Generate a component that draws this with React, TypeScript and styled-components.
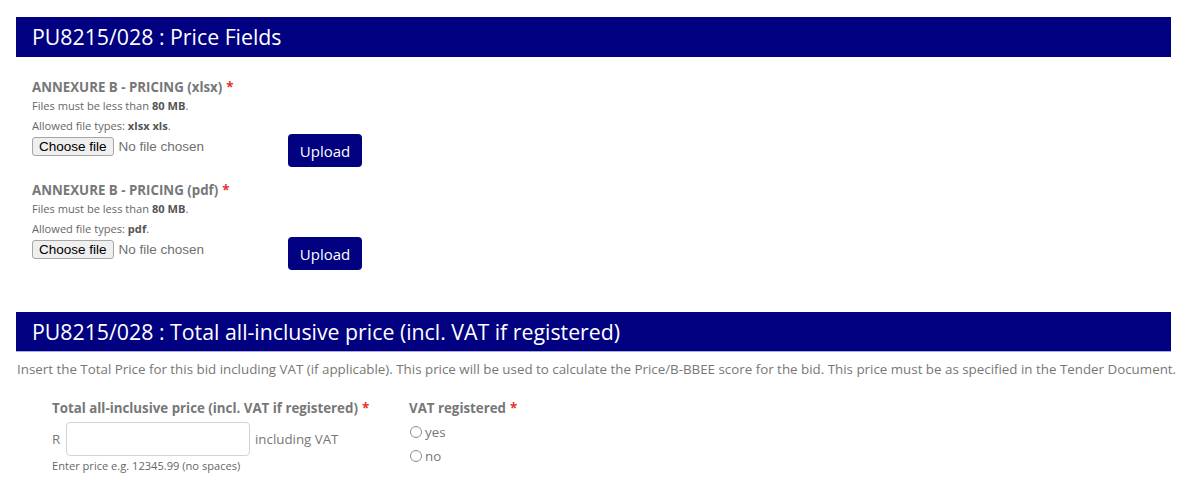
import React, { FC } from 'react';
import styled, { createGlobalStyle } from 'styled-components';

const GlobalStyle = createGlobalStyle`
    body {
        margin: 0;
        background: #fff;
        font-family: 'Open Sans', 'Noto Sans', sans-serif;
        color: #666;
    }
`;

const Page = styled.div`
    padding: 17px 29px 0 16px;
`;

const SectionHeader = styled.h2<{ $underline?: boolean }>`
    margin: 0;
    height: ${({ $underline }) => ($underline ? '39px' : '40px')};
    padding: 0 16px;
    background: #000080;
    color: #fff;
    font-size: 21.3px;
    font-weight: 400;
    line-height: ${({ $underline }) => ($underline ? '39px' : '40px')};
    border-bottom: ${({ $underline }) => ($underline ? '1px solid #a9a9e0' : 'none')};
`;

const UploadList = styled.div`
    padding: 22px 0 0 16px;
    display: flex;
    flex-direction: column;
    gap: 15px;
`;

const Field = styled.div`
    display: flex;
    flex-direction: column;
`;

const Label = styled.label`
    font-size: 13.3px;
    font-weight: 700;
    line-height: 17px;
    color: #777;
`;

const Required = styled.span`
    color: #e8302a;
    margin-left: 4px;
`;

const Hint = styled.div`
    font-size: 11.1px;
    line-height: 20px;
    color: #666;

    strong {
        color: #555;
        font-weight: 700;
    }
`;

const FileRow = styled.div`
    display: flex;
    align-items: flex-start;
    gap: 16px;
    margin-top: -2px;
`;

const FilePicker = styled.div`
    width: 240px;
    margin-top: 3px;
    display: flex;
    align-items: center;
    font-family: 'Liberation Sans', Arial, sans-serif;
    font-size: 13.5px;
`;

const ChooseButton = styled.span`
    display: inline-block;
    height: 17px;
    padding: 0 6px;
    line-height: 17px;
    border: 1px solid #a6a6a6;
    border-radius: 3px;
    background: #efefef;
    color: #000;
`;

const NoFile = styled.span`
    margin-left: 5px;
    color: #707070;
`;

const UploadButton = styled.button`
    height: 33px;
    width: 74px;
    padding: 0;
    border: none;
    border-radius: 4px;
    background: #000080;
    color: #fff;
    font-family: 'Open Sans', sans-serif;
    font-size: 15px;
`;

const TotalSection = styled.div`
    margin-top: 42px;
`;

const Intro = styled.p`
    margin: 7px 0 0 1px;
    font-size: 13.35px;
    line-height: 20px;
    color: #777;
    white-space: nowrap;
`;

const FieldsRow = styled.div`
    display: flex;
    padding: 21px 0 0 36px;
`;

const PriceField = styled.div`
    width: 357px;
    display: flex;
    flex-direction: column;
`;

const PriceRow = styled.div`
    display: flex;
    align-items: center;
    margin-top: 5px;
    font-size: 13.3px;
    color: #777;
`;

const Currency = styled.span`
    width: 14px;
`;

const PriceInput = styled.input`
    box-sizing: border-box;
    width: 184px;
    height: 34px;
    border: 1px solid #d4d4d4;
    border-radius: 4px;
    margin-right: 5px;
`;

const RadioGroup = styled.div`
    display: flex;
    flex-direction: column;
    gap: 4px;
    margin-top: 5px;
`;

const RadioOption = styled.label`
    display: flex;
    align-items: center;
    gap: 3px;
    font-size: 13.3px;
    line-height: 20px;
    color: #777;
`;

const Radio = styled.input`
    appearance: none;
    margin: 0 0 0 1px;
    width: 12px;
    height: 12px;
    border: 1px solid #8a8a8a;
    border-radius: 50%;
    background: #fff;
`;

const uploads = [
    { name: 'ANNEXURE B - PRICING (xlsx)', types: 'xlsx xls' },
    { name: 'ANNEXURE B - PRICING (pdf)', types: 'pdf' },
];

const UploadField: FC<{ name: string; types: string }> = ({ name, types }) => (
    <Field>
        <Label>
            {name}
            <Required>*</Required>
        </Label>
        <Hint>
            Files must be less than <strong>80 MB</strong>.
        </Hint>
        <Hint>
            Allowed file types: <strong>{types}</strong>.
        </Hint>
        <FileRow>
            <FilePicker>
                <ChooseButton>Choose file</ChooseButton>
                <NoFile>No file chosen</NoFile>
            </FilePicker>
            <UploadButton>Upload</UploadButton>
        </FileRow>
    </Field>
);

const App: FC = () => {
    return (
        <Page>
            <GlobalStyle />
            <SectionHeader>PU8215/028 : Price Fields</SectionHeader>
            <UploadList>
                {uploads.map((u) => (
                    <UploadField key={u.name} name={u.name} types={u.types} />
                ))}
            </UploadList>

            <TotalSection>
                <SectionHeader $underline>PU8215/028 : Total all-inclusive price (incl. VAT if registered)</SectionHeader>
                <Intro>
                    Insert the Total Price for this bid including VAT (if applicable). This price will be used to calculate the
                    Price/B-BBEE score for the bid. This price must be as specified in the Tender Document.
                </Intro>
                <FieldsRow>
                    <PriceField>
                        <Label>
                            Total all-inclusive price (incl. VAT if registered)
                            <Required>*</Required>
                        </Label>
                        <PriceRow>
                            <Currency>R</Currency>
                            <PriceInput type="text" />
                            including VAT
                        </PriceRow>
                        <Hint>Enter price e.g. 12345.99 (no spaces)</Hint>
                    </PriceField>
                    <Field>
                        <Label>
                            VAT registered
                            <Required>*</Required>
                        </Label>
                        <RadioGroup>
                            <RadioOption>
                                <Radio type="radio" name="vat" />
                                yes
                            </RadioOption>
                            <RadioOption>
                                <Radio type="radio" name="vat" />
                                no
                            </RadioOption>
                        </RadioGroup>
                    </Field>
                </FieldsRow>
            </TotalSection>
        </Page>
    );
};

export default App;
